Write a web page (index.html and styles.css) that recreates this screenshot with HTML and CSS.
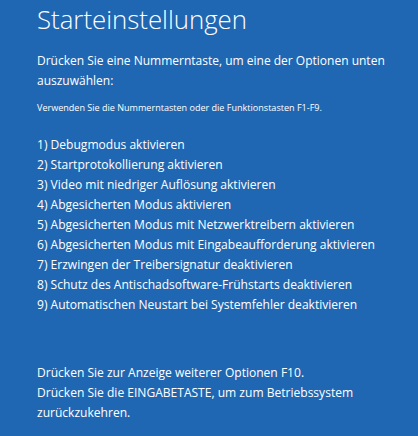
FILE: index.html
```html
<!DOCTYPE html>
<html lang="de">
<head>
<meta charset="utf-8">
<title>Starteinstellungen</title>
<link rel="stylesheet" href="styles.css">
</head>
<body>
<main class="screen">
  <h1 class="title">Starteinstellungen</h1>
  <p class="lead">Drücken Sie eine Nummerntaste, um eine der Optionen unten auszuwählen:</p>
  <p class="hint">Verwenden Sie die Nummerntasten oder die Funktionstasten F1-F9.</p>
  <ol class="options">
    <li>1) Debugmodus aktivieren</li>
    <li>2) Startprotokollierung aktivieren</li>
    <li>3) Video mit niedriger Auflösung aktivieren</li>
    <li>4) Abgesicherten Modus aktivieren</li>
    <li>5) Abgesicherten Modus mit Netzwerktreibern aktivieren</li>
    <li>6) Abgesicherten Modus mit Eingabeaufforderung aktivieren</li>
    <li>7) Erzwingen der Treibersignatur deaktivieren</li>
    <li>8) Schutz des Antischadsoftware-Frühstarts deaktivieren</li>
    <li>9) Automatischen Neustart bei Systemfehler deaktivieren</li>
  </ol>
  <div class="footer">
    <p>Drücken Sie zur Anzeige weiterer Optionen F10.</p>
    <p>Drücken Sie die EINGABETASTE, um zum Betriebssystem zurückzukehren.</p>
  </div>
</main>
</body>
</html>
```
FILE: styles.css
```css
html, body {
  margin: 0;
  padding: 0;
  background: #2067b3;
}
body {
  width: 418px;
  height: 436px;
  overflow: hidden;
}
.screen {
  color: #ffffff;
  font-family: "Open Sans", "Noto Sans", sans-serif;
  padding: 2px 0 0 37px;
  width: 356px;
}
.title {
  margin: 0;
  font-weight: 300;
  font-size: 25.8px;
  line-height: 34px;
}
.lead {
  margin: 15px 0 0;
  font-size: 12px;
  line-height: 20px;
  font-weight: 400;
}
.hint {
  margin: 10px 0 0;
  font-size: 9.05px;
  line-height: 13px;
}
.options {
  list-style: none;
  margin: 21px 0 0;
  padding: 0;
  font-size: 12.05px;
  line-height: 20px;
  white-space: nowrap;
}
.footer {
  margin-top: 48px;
  font-size: 12.05px;
  line-height: 20px;
}
.footer p {
  margin: 0;
}
```
